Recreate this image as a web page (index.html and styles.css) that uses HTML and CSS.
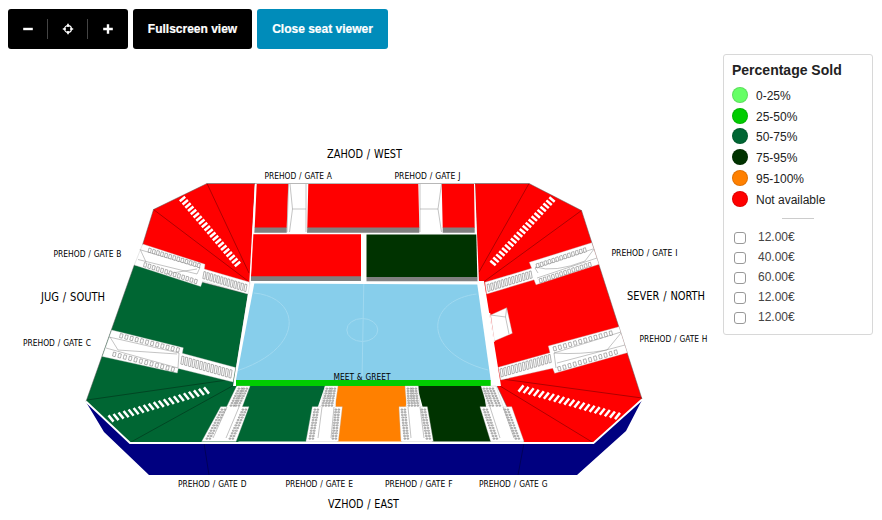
FILE: index.html
```
<!DOCTYPE html>
<html lang="en">
<head>
<meta charset="utf-8">
<title>Seat viewer</title>
<link rel="stylesheet" href="styles.css">
</head>
<body>
<header class="toolbar">
  <div class="zoom-group">
    <button class="zoom-btn" aria-label="Zoom out"><svg width="12" height="12" viewBox="0 0 12 12"><path d="M1.2 6H10.8" stroke="#fff" stroke-width="2.4"/></svg></button>
    <button class="zoom-btn" aria-label="Centre"><svg width="12" height="12" viewBox="0 0 12 12"><circle cx="6" cy="6" r="3.4" fill="none" stroke="#fff" stroke-width="1.3"/><path d="M6 .8V4M6 8v3.2M.8 6H4M8 6h3.2" stroke="#fff" stroke-width="1.7"/></svg></button>
    <button class="zoom-btn" aria-label="Zoom in"><svg width="12" height="12" viewBox="0 0 12 12"><path d="M1.2 6H10.8M6 1.2V10.8" stroke="#fff" stroke-width="2.4"/></svg></button>
  </div>
  <button class="btn btn-full">Fullscreen view</button>
  <button class="btn btn-close">Close seat viewer</button>
</header>
<main class="viewer">
  <svg class="arena" width="715" height="466" viewBox="0 54 715 466">
    <polygon class="navy" points="86,402 130,443 593,443 642,400 626,431 577,475 149,475 104,432"/>
    <path class="fold" d="M204 443L209 475M524 443L518 475"/>

    <polygon class="red edge" points="207,183.5 255,183.5 250,284 205,270 142.500,245 153.5,209.5"/>
    <polygon class="red edge" points="475,183.5 529,183.5 581.5,210.5 642,399 593.5,442.5 524,442.5 497,386 478,283"/>
    <polygon class="green edge" points="134.3,265 248,294 234,381 250,386 238,442.5 130,442.5 86,401.5"/>
    <path class="fold" d="M207 183.5L249 273M153.5 209.5L248 281M529 183.5L479 272M581.5 210.5L482 283M87 400L234 379M131 442L236 384M642 398L502 379M592 442L500 386"/>
    <path class="rim" d="M86 401.5L130 443H593.5L642 399.5"/>

    <polygon class="green" points="250,386 325,386 306,441.5 235,441.5"/>
    <polygon class="orange" points="335,386 408,386 402,441.5 337,441.5"/>
    <polygon class="dark" points="417,386 483,386 491,441.5 432,441.5"/>

    <path class="floor" d="M255 183.5H475L479 283H250Z"/>
    <path class="floor" d="M250 281H484L501 386H233Z"/>
    <path class="topline" d="M207 183.5H529"/>
    <path class="grey" d="M254.7 227H286.7V232.7H254.3ZM307.3 227H419.3V232.7H307ZM442.7 227H474.7V232.7H442.7ZM251 276H361V281H250.7ZM366.5 277H477.5V281.3H366.5Z"/>
    <path class="red" d="M256.7 184H288.3L286.7 227.5H254.7ZM308.3 184H418.3L419.3 227.5H307.3ZM441.7 184H474L474.7 227.5H442.7ZM252 234.3H361V276.3H251Z"/>
    <polygon class="dark" points="366.5,234.5 476.3,234.5 477.3,277 366.5,277"/>
    <path class="gap-line" d="M255.500 184L250 282"/>
    <path class="line" d="M288.5 184L287 232M290 184L292.5 209L289.5 232M306 184V232M292.5 209H306M420 184V232M441.5 184L438 209L441.5 232M420 209H438"/>

    <polygon class="pitch" points="254.3,283.5 477.3,284.5 490.7,380 236,380"/>
    <path class="marking" d="M363.8 284L362 380M254 293C300 297 307 347 238 370.5M476.5 294C424 301 422 353 488 370"/>
    <ellipse class="marking" cx="362.3" cy="330" rx="15.5" ry="11.5"/>
    <rect class="lime" x="236" y="380" width="254.7" height="6"/>
    <polygon class="gate" points="490.7,315 506.7,307.7 512.3,333.3 494.3,341"/>
    <path class="line" d="M490.7 315L505.5 317L506.7 308M505.5 317L509 334"/>
    <path class="gap-line" d="M489.500 313L494 342"/>

    <polygon class="gate" points="142.7,244 205,264.3 204.3,269 250,282.3 248,294 202.7,281 200.7,286.5 134.3,265"/>
    <polygon class="gate" points="111.7,330 183.300,347.800 182.3,353.300 235.5,367.500 233,382 178.3,368.5 177.3,373 102.3,356.5"/>
    <polygon class="gate" points="591.7,242.7 529.3,262.3 531.7,268.3 485,282.3 486.7,294 534,279.8 536,284.8 599,264.3"/>
    <polygon class="gate" points="619,326.7 548.3,346 550,352.7 498.3,367.3 500.7,380 552.7,368.3 554.7,373.3 627.3,352.7"/>
    <path class="line" d="M141 250L200 267.500L197 274L138 259.500M140 249L146 262M197 269L166 274M109 337L179 353L178 368L106 348M110 337L118 350L177 354M593 249L535 268L538 273M597 258L537 278M594 249L585 261Q555 273 535 267M621 332L554 353L556 368M625 345L557 363M621 333L607 350Q580 355 554 353"/>

    <polygon class="gate" points="236.7,386 250,386 242.3,406.7 249,406.7 236,441.5 201.7,441.5 220.7,406.7 226.7,406.7"/>
    <polygon class="gate" points="325,386 338,386 335,406.7 342.3,406.7 338.3,441.5 306,441.5 312.3,406.7 321,406.7"/>
    <polygon class="gate" points="405,386 418.3,386 420,406.7 427.3,406.7 433.3,441.5 401,441.5 399,406.7 406.7,406.7"/>
    <polygon class="gate" points="481,386 496,386 503.3,407 511.7,406.7 524,441.5 490.7,441.5 480,406.7 487.3,406.7"/>
    <path class="line" d="M227 407L213 438M239 407L226 438M322 407L318 438M334 407L331 438M408 407L411 438M420 407L424 438M490 407L500 438M503 407L514 438"/>

    <g id="seats"></g>
    <g id="steps"></g>

    <g class="side">
      <text x="327" y="158" textLength="75" lengthAdjust="spacingAndGlyphs">ZAHOD / WEST</text>
      <text x="41" y="301" textLength="64" lengthAdjust="spacingAndGlyphs">JUG / SOUTH</text>
      <text x="627" y="300" textLength="78" lengthAdjust="spacingAndGlyphs">SEVER / NORTH</text>
      <text x="328" y="508" textLength="71" lengthAdjust="spacingAndGlyphs">VZHOD / EAST</text>
    </g>
    <g class="gate-name">
      <text x="264.500" y="179" textLength="67.500" lengthAdjust="spacingAndGlyphs">PREHOD / GATE A</text>
      <text x="394.500" y="179" textLength="66" lengthAdjust="spacingAndGlyphs">PREHOD / GATE J</text>
      <text x="53.500" y="257" textLength="68" lengthAdjust="spacingAndGlyphs">PREHOD / GATE B</text>
      <text x="23" y="346" textLength="68" lengthAdjust="spacingAndGlyphs">PREHOD / GATE C</text>
      <text x="611.500" y="256" textLength="66" lengthAdjust="spacingAndGlyphs">PREHOD / GATE I</text>
      <text x="639.500" y="342" textLength="68" lengthAdjust="spacingAndGlyphs">PREHOD / GATE H</text>
      <text x="178" y="487" textLength="68.500" lengthAdjust="spacingAndGlyphs">PREHOD / GATE D</text>
      <text x="285.500" y="487" textLength="67.500" lengthAdjust="spacingAndGlyphs">PREHOD / GATE E</text>
      <text x="385" y="487" textLength="67.500" lengthAdjust="spacingAndGlyphs">PREHOD / GATE F</text>
      <text x="479" y="487" textLength="68.500" lengthAdjust="spacingAndGlyphs">PREHOD / GATE G</text>
      <text x="333.500" y="380" textLength="57" lengthAdjust="spacingAndGlyphs">MEET &amp; GREET</text>
    </g>
  </svg>
  <aside class="legend">
    <h2>Percentage Sold</h2>
    <ul class="levels">
      <li><i class="dot l1"></i>0-25%</li>
      <li><i class="dot l2"></i>25-50%</li>
      <li><i class="dot l3"></i>50-75%</li>
      <li><i class="dot l4"></i>75-95%</li>
      <li><i class="dot l5"></i>95-100%</li>
      <li><i class="dot l6"></i>Not available</li>
    </ul>
    <hr>
    <ul class="prices">
      <li><label><input type="checkbox">12.00€</label></li>
      <li><label><input type="checkbox">40.00€</label></li>
      <li><label><input type="checkbox">60.00€</label></li>
      <li><label><input type="checkbox">12.00€</label></li>
      <li><label><input type="checkbox">12.00€</label></li>
    </ul>
  </aside>
</main>
<script src="arena.js"></script>
</body>
</html>
```
FILE: styles.css
```
* { box-sizing: border-box; }
body {
  margin: 0;
  height: 520px;
  overflow: hidden;
  background: #fff;
  font-family: "Liberation Sans", Arial, sans-serif;
  color: #222;
}
button { border: 0; margin: 0; padding: 0; font: inherit; color: #fff; }
.toolbar { display: flex; gap: 5px; height: 54px; padding: 9px 8px 5px; }
.zoom-group { display: flex; align-items: center; width: 120px; border-radius: 3px; background: #000; }
.zoom-btn { display: flex; align-items: center; justify-content: center; width: 40px; height: 20px; background: none; }
.zoom-btn:not(:last-child) { border-right: 1px solid #444; }
.btn { height: 40px; border-radius: 3px; font-size: 12px; font-weight: bold; white-space: nowrap; -webkit-text-stroke: .2px #fff; }
.btn-full { width: 119px; background: #000; }
.btn-close { width: 131px; background: #008cba; }

.viewer { display: flex; align-items: flex-start; gap: 8px; }
.arena { flex: none; }
.red { fill: #f00; }
.green { fill: #063; }
.dark { fill: #030; }
.orange { fill: #ff8000; }
.navy { fill: navy; }
.lime { fill: #0c0; }
.grey { fill: gray; }
.pitch { fill: #87ceeb; }
.floor, .gate { fill: #fff; }
.gate { stroke: #bbb; stroke-width: .35; }
.edge { stroke: #555; stroke-width: .5; }
.topline { fill: none; stroke: #888; stroke-width: .6; }
.gap-line { fill: none; stroke: #fff; stroke-width: 1.4; }
.fold { fill: none; stroke: #000; stroke-opacity: .45; stroke-width: .7; }
.rim { fill: none; stroke: #fff; stroke-width: 1.8; }
.line { fill: none; stroke: #888; stroke-width: .5; }
.marking { fill: none; stroke: #a0d9f0; stroke-width: 1; }
.seat { fill: #fff; stroke: #666; stroke-width: .5; }
.step { stroke: #fff; stroke-width: 2.5; }
.side, .gate-name { font-family: "DejaVu Sans Condensed", "DejaVu Sans", sans-serif; fill: #000; }
.side { font-size: 11.6px; word-spacing: .8px; }
.gate-name { font-size: 8.9px; word-spacing: .5px; }

.legend { width: 150px; height: 281px; padding: 8px; border: 1px solid #d8d8d8; border-radius: 3px; }
.legend h2 { margin: 0 0 7px; font-size: 14px; line-height: 15px; white-space: nowrap; }
.legend ul { list-style: none; margin: 0; padding: 0; }
.levels li { display: flex; align-items: center; gap: 8px; height: 20.8px; padding-top: 1px; font-size: 12px; }
.dot { width: 16px; height: 16px; margin-top: -2px; border-radius: 50%; border: 1px solid rgba(0, 0, 0, .12); }
.l1 { background: #6f6; }
.l2 { background: #0c0; }
.l3 { background: #063; }
.l4 { background: #030; }
.l5 { background: #ff8000; }
.l6 { background: red; }
.legend hr { width: 32px; height: 1px; margin: 8px auto; border: 0; background: #ccc; }
.prices label { display: flex; align-items: center; height: 20px; font-size: 12px; color: #444; }
.prices input { appearance: none; width: 12px; height: 12px; margin: 3px 12px 0 2px; border: 1px solid #999; border-radius: 3px; background: #fff; }
```
FILE: arena.js
```
const NS = "http://www.w3.org/2000/svg";

function add(parent, cls, d) {
  const p = document.createElementNS(NS, "path");
  p.setAttribute("class", cls);
  p.setAttribute("d", d);
  document.getElementById(parent).append(p);
}

// Seats: [x1, y1, x2, y2, count, along x/y of one seat, across x/y of one seat]
const seatRows = [
  [149, 248, 198, 263, 13, 2.4, .8, -1, 4],
  [144.500, 262.500, 195, 279, 13, 2.4, .8, -1, 4],
  [204, 271.500, 245, 284, 13, 2, .6, -1.2, 7],
  [120.500, 333.500, 177, 347.500, 12, 2.600, .7, -1, 4],
  [113.500, 352, 172, 367, 12, 2.600, .7, -1, 4],
  [182, 356, 230, 369.500, 14, 2.100, .6, -1.2, 8],
  [536, 264, 583, 248.500, 13, 2.4, -.8, 1, 4],
  [539, 279, 588, 263, 13, 2.4, -.8, 1, 4],
  [487, 284.500, 529, 271.500, 13, 2, -.6, 1.2, 7],
  [553, 347, 609, 331.500, 12, 2.600, -.7, 1, 4],
  [557.500, 367, 614, 350.500, 12, 2.600, -.7, 1, 4],
  [500, 369, 548, 355, 14, 2.1, -.6, 1.2, 8]
];
for (const [x1, y1, x2, y2, n, ax, ay, bx, by] of seatRows) {
  let d = "";
  for (let i = 0; i < n; i++) {
    const t = i / (n - 1);
    d += `M${x1 + (x2 - x1) * t} ${y1 + (y2 - y1) * t}l${ax} ${ay} ${bx} ${by} ${-ax} ${-ay}z`;
  }
  add("seats", "seat", d);
}

// Narrow double columns beside the lower gates: [top x, bottom x, top y, bottom y, rows]
const columns = [
  [238, 230, 388, 405, 8], [243, 235, 388, 405, 8],
  [221, 206, 409, 438, 12], [242, 229, 409, 438, 12],
  [326, 322, 388, 405, 8], [331, 328, 388, 405, 8],
  [314, 309, 409, 438, 12], [335, 332, 409, 438, 12],
  [407, 408, 388, 405, 8], [412, 414, 388, 405, 8],
  [401, 404, 409, 438, 12], [421, 426, 409, 438, 12],
  [483, 489, 388, 405, 8], [489, 496, 388, 405, 8],
  [483, 493, 409, 438, 12], [504, 515, 409, 438, 12]
];
for (const [x1, x2, y1, y2, n] of columns) {
  let d = "";
  for (let i = 0; i < n; i++) {
    const t = i / (n - 1);
    d += `M${x1 + (x2 - x1) * t} ${y1 + (y2 - y1) * t}h1.700v1.200h-1.700zm3 0h1.700v1.200h-1.700z`;
  }
  add("seats", "seat", d);
}

// Stairways: [first centre, last centre, count, half stroke vector]
const stairs = [
  [182.500, 199, 237.500, 264, 21, 2.700, -2.300],
  [552, 199.500, 493, 263, 21, 2.700, 2.300],
  [111, 418.500, 206.500, 390.500, 20, 2.500, 3.100],
  [521, 388.500, 617.500, 416, 20, 2.500, -3.100]
];
for (const [x1, y1, x2, y2, n, hx, hy] of stairs) {
  let d = "";
  for (let i = 0; i < n; i++) {
    const t = i / (n - 1);
    d += `M${x1 + (x2 - x1) * t - hx} ${y1 + (y2 - y1) * t - hy}l${2 * hx} ${2 * hy}`;
  }
  add("steps", "step", d);
}
```
